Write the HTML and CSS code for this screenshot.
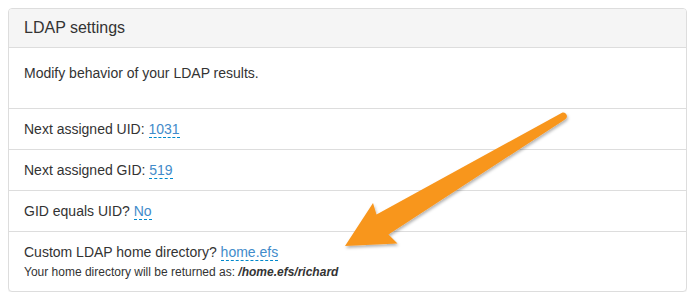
FILE: index.html
```html
<!DOCTYPE html>
<html lang="en">
<head>
    <meta charset="UTF-8">
    <title>LDAP settings</title>
    <link rel="stylesheet" href="styles.css">
</head>
<body>
    <div class="panel">
        <div class="panel-heading">
            <h3 class="panel-title">LDAP settings</h3>
        </div>
        <div class="panel-body">
            <p>Modify behavior of your LDAP results.</p>
        </div>
        <ul class="list-group">
            <li class="list-group-item">Next assigned UID: <a href="#" class="editable">1031</a></li>
            <li class="list-group-item">Next assigned GID: <a href="#" class="editable">519</a></li>
            <li class="list-group-item">GID equals UID? <a href="#" class="editable">No</a></li>
            <li class="list-group-item">
                Custom LDAP home directory? <a href="#" class="editable">home.efs</a>
                <div class="help-text">Your home directory will be returned as: <strong><em>/home.efs/richard</em></strong></div>
            </li>
        </ul>
    </div>

    <!-- annotation arrow -->
    <svg class="arrow" width="698" height="303" viewBox="0 0 698 303">
        <defs>
            <filter id="shadow" x="-10%" y="-10%" width="120%" height="130%">
                <feDropShadow dx="1" dy="2" stdDeviation="1.5" flood-color="#000" flood-opacity="0.3"/>
            </filter>
        </defs>
        <path filter="url(#shadow)" fill="#f8961e"
              d="M562.5 112.5 Q566 112 567 116 Q567 118 565 119.5 L388.5 234.5 L397.5 243.5 L345 246 L373 203 L376.5 214.5 Z"/>
    </svg>
</body>
</html>
```

FILE: styles.css
```css
body {
    margin: 8px 11px 8px 8px;
    background: #fff;
    font-family: "Liberation Sans", Arial, sans-serif;
    font-size: 14px;
    line-height: 20px;
    color: #333;
}
.panel {
    border: 1px solid #ddd;
    border-radius: 4px;
    background: #fff;
    box-shadow: 0 1px 1px rgba(0, 0, 0, 0.05);
    overflow: hidden;
}
.panel-heading {
    background: #f5f5f5;
    border-bottom: 1px solid #ddd;
    padding: 10px 15px;
}
.panel-title {
    margin: 0;
    font-size: 16px;
    font-weight: normal;
    line-height: 18px;
    color: #333;
}
.panel-body {
    padding: 15px;
}
.panel-body p {
    margin: 0 0 10px;
}
.list-group {
    list-style: none;
    margin: 0;
    padding: 0;
}
.list-group-item {
    border-top: 1px solid #ddd;
    padding: 10px 15px;
}
.editable {
    color: #428bca;
    text-decoration: none;
    border-bottom: 1px dashed #08c;
}
.help-text {
    margin-top: 2px;
    font-size: 12px;
    line-height: 17px;
    color: #333;
}
.arrow {
    position: absolute;
    top: 0;
    left: 0;
    pointer-events: none;
}
```
